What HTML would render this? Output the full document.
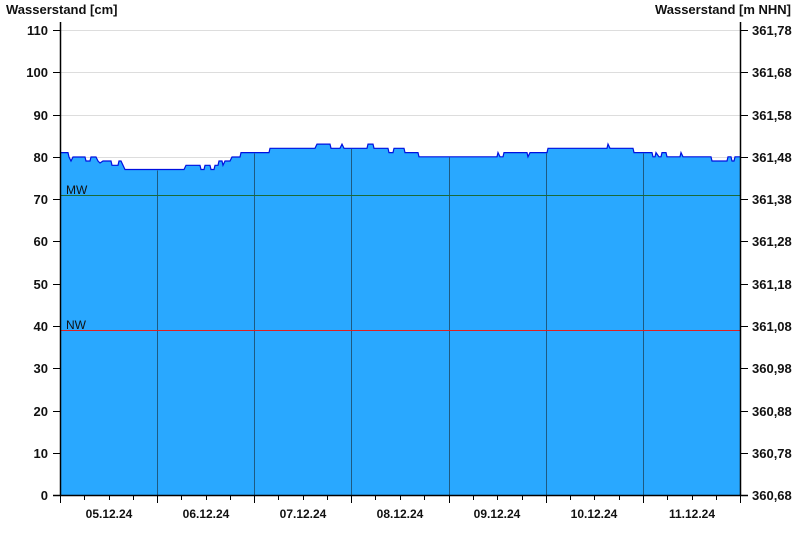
<!DOCTYPE html>
<html><head><meta charset="utf-8"><style>body{margin:0;background:#fff}svg{display:block}text{font-family:"Liberation Sans",Arial,sans-serif;font-weight:bold;font-size:13px;fill:#111}</style></head><body>
<svg width="800" height="550" xmlns="http://www.w3.org/2000/svg">
<text x="6" y="14">Wasserstand [cm]</text>
<text x="791" y="14" text-anchor="end">Wasserstand [m NHN]</text>
<g stroke="#ddd" stroke-width="1">
<line x1="61" x2="740" y1="30.5" y2="30.5"/><line x1="61" x2="740" y1="72.5" y2="72.5"/><line x1="61" x2="740" y1="115.5" y2="115.5"/><line x1="61" x2="740" y1="157.5" y2="157.5"/>
</g>
<path fill="#29a8ff" stroke="none" d="M61,495 L61,152.6 H68 L69,157 L71,161 L73,157 H85 L86,161 H90 L91,157 H96 L98,161 L100,163 L103,161 H111 L112,165.3 H118 L119,161 H121 L125,169.5 H184 L186,165.3 H200 L201,169.5 H204 L205,165.3 H210 L211,169.5 H214 L215,165.3 H218 L219,161 H222 L223,165.3 L225,161 H230 L232,157 H240 L241,152.6 H269 L270,148.3 H315 L317,144.1 H330 L331,148.3 H340 L342,144.1 L344,148.3 H367 L368,144.1 H373 L374,148.3 H388 L389,152.6 H393 L394,148.3 H404 L405,152.6 H418 L419,156.8 H497 L498,152.6 L500,156.8 H503 L504,152.6 H527 L528,156.8 L530,152.6 H547 L548,148.3 H607 L608,144.1 L610,148.3 H633 L634,152.6 H652 L653,156.8 H655 L656,152.6 L659,156.8 H661 L662,152.6 H666 L667,156.8 H680 L681,152.6 L683,156.8 H711 L712,161 H727 L728,156.8 H731 L732,161 H734 L735,156.8 H740 V495 Z"/>
<path fill="none" stroke="#0010e0" stroke-width="1.2" d="M61,152.6 H68 L69,157 L71,161 L73,157 H85 L86,161 H90 L91,157 H96 L98,161 L100,163 L103,161 H111 L112,165.3 H118 L119,161 H121 L125,169.5 H184 L186,165.3 H200 L201,169.5 H204 L205,165.3 H210 L211,169.5 H214 L215,165.3 H218 L219,161 H222 L223,165.3 L225,161 H230 L232,157 H240 L241,152.6 H269 L270,148.3 H315 L317,144.1 H330 L331,148.3 H340 L342,144.1 L344,148.3 H367 L368,144.1 H373 L374,148.3 H388 L389,152.6 H393 L394,148.3 H404 L405,152.6 H418 L419,156.8 H497 L498,152.6 L500,156.8 H503 L504,152.6 H527 L528,156.8 L530,152.6 H547 L548,148.3 H607 L608,144.1 L610,148.3 H633 L634,152.6 H652 L653,156.8 H655 L656,152.6 L659,156.8 H661 L662,152.6 H666 L667,156.8 H680 L681,152.6 L683,156.8 H711 L712,161 H727 L728,156.8 H731 L732,161 H734 L735,156.8 H740"/>
<g stroke="#1d5a82" stroke-width="1">
<line x1="157.5" x2="157.5" y1="170.5" y2="495"/><line x1="254.5" x2="254.5" y1="153.5" y2="495"/><line x1="351.5" x2="351.5" y1="149" y2="495"/><line x1="449.5" x2="449.5" y1="157.5" y2="495"/><line x1="546.5" x2="546.5" y1="153.5" y2="495"/><line x1="643.5" x2="643.5" y1="153.5" y2="495"/>
</g>
<line x1="61" x2="740" y1="195.5" y2="195.5" stroke="#1a6a3a" stroke-width="1"/>
<line x1="61" x2="740" y1="330.5" y2="330.5" stroke="#e02020" stroke-width="1"/>
<text x="66" y="194" style="font-weight:normal;font-size:12px">MW</text>
<text x="66" y="329" style="font-weight:normal;font-size:12px">NW</text>
<g stroke="#000" stroke-width="1.5">
<line x1="60.5" x2="60.5" y1="22" y2="496"/><line x1="740.5" x2="740.5" y1="22" y2="496"/><line x1="53" x2="748" y1="495.5" y2="495.5"/>
</g>
<g stroke="#000" stroke-width="1">
<path d="M53,30.5H60M53,72.5H60M53,115.5H60M53,157.5H60M53,199.5H60M53,241.5H60M53,284.5H60M53,326.5H60M53,368.5H60M53,411.5H60M53,453.5H60"/>
<path d="M741,30.5H748M741,72.5H748M741,115.5H748M741,157.5H748M741,199.5H748M741,241.5H748M741,284.5H748M741,326.5H748M741,368.5H748M741,411.5H748M741,453.5H748"/>
<path d="M60.5,495V503M157.5,495V503M254.5,495V503M351.5,495V503M449.5,495V503M546.5,495V503M643.5,495V503M740.5,495V503"/>
<path d="M84.5,495V500M109.5,495V500M133.5,495V500M181.5,495V500M206.5,495V500M230.5,495V500M278.5,495V500M303.5,495V500M327.5,495V500M375.5,495V500M400.5,495V500M424.5,495V500M473.5,495V500M497.5,495V500M522.5,495V500M570.5,495V500M594.5,495V500M619.5,495V500M667.5,495V500M692.5,495V500M716.5,495V500"/>
</g>
<g text-anchor="end">
<text x="48" y="35">110</text><text x="48" y="77">100</text><text x="48" y="120">90</text><text x="48" y="162">80</text><text x="48" y="204">70</text><text x="48" y="246">60</text><text x="48" y="289">50</text><text x="48" y="331">40</text><text x="48" y="373">30</text><text x="48" y="416">20</text><text x="48" y="458">10</text><text x="48" y="500">0</text>
</g>
<g>
<text x="752" y="35">361,78</text><text x="752" y="77">361,68</text><text x="752" y="120">361,58</text><text x="752" y="162">361,48</text><text x="752" y="204">361,38</text><text x="752" y="246">361,28</text><text x="752" y="289">361,18</text><text x="752" y="331">361,08</text><text x="752" y="373">360,98</text><text x="752" y="416">360,88</text><text x="752" y="458">360,78</text><text x="752" y="500">360,68</text>
</g>
<g text-anchor="middle">
<text x="109" y="518" style="font-size:12px">05.12.24</text><text x="206" y="518" style="font-size:12px">06.12.24</text><text x="303" y="518" style="font-size:12px">07.12.24</text><text x="400" y="518" style="font-size:12px">08.12.24</text><text x="497" y="518" style="font-size:12px">09.12.24</text><text x="594" y="518" style="font-size:12px">10.12.24</text><text x="692" y="518" style="font-size:12px">11.12.24</text>
</g>
</svg>
</body></html>
